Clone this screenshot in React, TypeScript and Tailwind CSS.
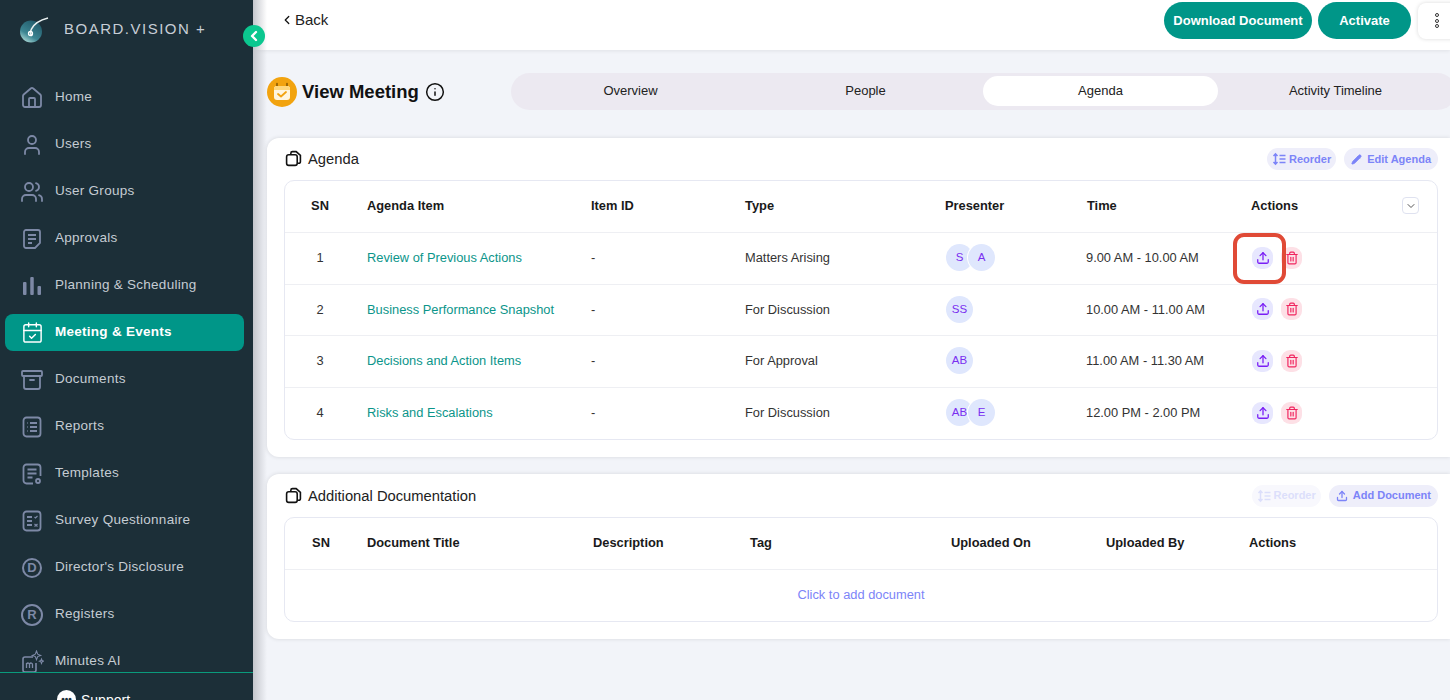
import { ChevronLeft, ChevronDown, House, User, Users, CalendarCheck, Archive, Info, Pencil, Upload, Trash2 } from "lucide-react";
import type { ReactNode } from "react";

const ic = "w-6 h-6 text-[#7d89a6] shrink-0";

function Approvals() {
  return (
    <svg viewBox="0 0 24 24" fill="none" stroke="currentColor" strokeWidth="1.8" className={ic}>
      <path d="M15 21H6a2 2 0 0 1-2-2V5a2 2 0 0 1 2-2h12a2 2 0 0 1 2 2v11l-5 5z" />
      <path d="M8 8h8M8 12h8M8 16h4" />
    </svg>
  );
}

function Bars() {
  return (
    <svg viewBox="0 0 24 24" fill="currentColor" className={ic}>
      <rect x="3" y="8" width="3.5" height="13" rx="1" />
      <rect x="10.25" y="3" width="3.5" height="18" rx="1" />
      <rect x="17.5" y="12" width="3.5" height="9" rx="1" />
    </svg>
  );
}

function ListDoc() {
  return (
    <svg viewBox="0 0 24 24" fill="none" stroke="currentColor" strokeWidth="1.8" className={ic}>
      <rect x="3.5" y="2.5" width="17" height="19" rx="3" />
      <path d="M10 8h7M10 12h7M10 16h7M7 8h.5M7 12h.5M7 16h.5" />
    </svg>
  );
}

function TemplateDoc() {
  return (
    <svg viewBox="0 0 24 24" fill="none" stroke="currentColor" strokeWidth="1.8" className={ic}>
      <path d="M13 21.5H6.5a3 3 0 0 1-3-3v-13a3 3 0 0 1 3-3h11a3 3 0 0 1 3 3V14" />
      <path d="M7.5 7.5h9M7.5 11.5h9M7.5 15.5h5" />
      <circle cx="18" cy="19" r="2" />
    </svg>
  );
}

function SurveyDoc() {
  return (
    <svg viewBox="0 0 24 24" fill="none" stroke="currentColor" strokeWidth="1.8" className={ic}>
      <rect x="3.5" y="2.5" width="17" height="19" rx="3" />
      <path d="M7 8h5M7 12h5M7 16h5" />
      <path d="M14.5 8l1 1 2-2M14.5 15l3 2.5M17.5 15l-3 2.5" strokeWidth="1.2" />
    </svg>
  );
}

function Lettered({ letter, size }: { letter: string; size: string }) {
  return (
    <span className={`${size} rounded-full border-2 border-[#7d89a6] text-[#7d89a6] flex items-center justify-center text-[13px] font-bold shrink-0`}>
      {letter}
    </span>
  );
}

function MinutesIcon() {
  return (
    <svg viewBox="0 0 24 24" fill="none" stroke="currentColor" strokeWidth="1.6" className="w-[24px] h-[24px] text-[#7d89a6] shrink-0">
      <path d="M13 7H5a2 2 0 0 0-2 2v11a2 2 0 0 0 2 2h9a2 2 0 0 0 2-2v-7" />
      <path d="M6.5 18v-5M6.5 14c1-1.5 3-1.2 3 .5V18M9.5 14c1-1.5 3-1.2 3 .5V18" strokeWidth="1.3" />
      <path d="M16.5 1l1.2 3.2 3 1.2-3 1.2-1.2 3.2-1.2-3.2-3-1.2 3-1.2zM21.5 9l.6 1.6 1.4.6-1.4.6-.6 1.6-.6-1.6-1.4-.6 1.4-.6z" strokeWidth="1.1" />
    </svg>
  );
}

const navItems: { label: string; icon: ReactNode; active?: boolean }[] = [
  { label: "Home", icon: <House className={ic} strokeWidth={1.8} /> },
  { label: "Users", icon: <User className={ic} strokeWidth={1.8} /> },
  { label: "User Groups", icon: <Users className={ic} strokeWidth={1.8} /> },
  { label: "Approvals", icon: <Approvals /> },
  { label: "Planning & Scheduling", icon: <Bars /> },
  { label: "Meeting & Events", icon: <span className="w-6 flex justify-center shrink-0"><CalendarCheck className="w-[23px] h-[23px] text-white" strokeWidth={1.5} /></span>, active: true },
  { label: "Documents", icon: <Archive className={ic} strokeWidth={1.8} /> },
  { label: "Reports", icon: <ListDoc /> },
  { label: "Templates", icon: <TemplateDoc /> },
  { label: "Survey Questionnaire", icon: <SurveyDoc /> },
  { label: "Director's Disclosure", icon: <Lettered letter="D" size="w-[20px] h-[20px] mx-[2px]" /> },
  { label: "Registers", icon: <Lettered letter="R" size="w-[22px] h-[22px] mx-px" /> },
  { label: "Minutes AI", icon: <MinutesIcon /> },
];

const agendaRows = [
  { sn: 1, item: "Review of Previous Actions", type: "Matters Arising", people: ["S", "A"], time: "9.00 AM - 10.00 AM" },
  { sn: 2, item: "Business Performance Snapshot", type: "For Discussion", people: ["SS"], time: "10.00 AM - 11.00 AM" },
  { sn: 3, item: "Decisions and Action Items", type: "For Approval", people: ["AB"], time: "11.00 AM - 11.30 AM" },
  { sn: 4, item: "Risks and Escalations", type: "For Discussion", people: ["AB", "E"], time: "12.00 PM - 2.00 PM" },
];

const agendaGrid = "grid grid-cols-[82px_224px_154px_200px_142px_164px_1fr] items-center pb-px";
const docGrid = "grid grid-cols-[82px_226px_157px_201px_155px_143px_1fr] items-center pb-px";

function CopyIcon() {
  return (
    <svg viewBox="0 0 16 16" fill="none" stroke="#111" strokeWidth="1.5" className="w-[17px] h-[17px] shrink-0 ml-px -mt-[2px]">
      <path d="M5.5 4V3a1.5 1.5 0 0 1 1.5-1.5h3.5L14.5 5v6a1.5 1.5 0 0 1-1.5 1.5h-1.5" />
      <rect x="1.5" y="4.5" width="10" height="10" rx="2" />
    </svg>
  );
}

function ReorderIcon() {
  return (
    <svg viewBox="0 0 14 14" fill="none" stroke="currentColor" strokeWidth="1.5" className="w-[14px] h-[14px] shrink-0">
      <path d="M3.5 2.5v9M1.5 4l2-2.2 2 2.2M1.5 10l2 2.2 2-2.2" />
      <path d="M7.5 3.5h6M7.5 7h6M7.5 10.5h6" />
    </svg>
  );
}

function Pill({ icon, label, faded, tight }: { icon: ReactNode; label: string; faded?: boolean; tight?: boolean }) {
  return (
    <span className={`h-[22px] rounded-full flex items-center text-[11px] font-bold ${tight ? "px-[5px] gap-[3px]" : "px-[7px] gap-[5px]"} ${faded ? "bg-[#f8f8fd] text-[#dcdffb]" : "bg-[#eeeefa] text-[#7c84f8]"}`}>
      {icon}
      {label}
    </span>
  );
}

function Logo() {
  return (
    <svg viewBox="0 0 30 26" className="w-[30px] h-[26px]">
      <defs>
        <linearGradient id="logoFill" x1="0.8" y1="0" x2="0.2" y2="1">
          <stop offset="0" stopColor="#1f5666" />
          <stop offset="0.65" stopColor="#3c8592" />
          <stop offset="1" stopColor="#b4e0dc" />
        </linearGradient>
      </defs>
      <circle cx="12" cy="14.5" r="11" fill="url(#logoFill)" />
      <path d="M29 1C21 3 15 7 12.5 12c-1 2-1.500 5 .5 7" fill="none" stroke="#e8f0f0" strokeWidth="1.6" />
      <circle cx="11.500" cy="16.500" r="2" fill="none" stroke="#fff" strokeWidth="1.3" />
    </svg>
  );
}

function MeetingBadge() {
  return (
    <svg viewBox="0 0 30 30" className="w-[30px] h-[30px] shrink-0">
      <circle cx="15" cy="15" r="15" fill="#f2a30f" />
      <path d="M10 6.500v4M20 6.500v4" stroke="#8a5a00" strokeWidth="1.600" strokeLinecap="round" />
      <rect x="7" y="9" width="16" height="14" rx="3" fill="#fff6df" />
      <path d="M7 12a3 3 0 0 1 3-3h10a3 3 0 0 1 3 3v1H7z" fill="#ffd77a" />
      <path d="M11 17l3 2.500 5-4.500" fill="none" stroke="#f2a30f" strokeWidth="1.800" strokeLinecap="round" strokeLinejoin="round" />
    </svg>
  );
}

export default function App() {
  return (
    <div className="relative h-screen w-full overflow-hidden flex bg-[#f2f4f9] font-['Liberation_Sans',Arial,sans-serif]">
      {/* SIDEBAR */}
      <aside className="w-[253px] h-full shrink-0 bg-[#1c2f38] flex flex-col overflow-hidden">
        <div className="h-[58px] shrink-0 flex items-center pl-[19px] pt-[1px]">
          <Logo />
          <span className="ml-[15px] text-[15px] tracking-[0.1em] text-[#c7ced6] whitespace-nowrap">BOARD.VISION +</span>
        </div>
        <nav className="h-[614px] shrink-0 overflow-hidden flex flex-col pt-[21px]">
          {navItems.map((n) => (
            <div
              key={n.label}
              className={`h-[37px] mb-[10px] ml-[5px] w-[239px] shrink-0 rounded-lg flex items-center gap-[11px] pl-[15px] text-[13.5px] tracking-[0.02em] ${
                n.active ? "bg-[#009688] text-white font-bold" : "text-[#c5ccd3]"
              }`}
            >
              {n.icon}
              <span className="whitespace-nowrap">{n.label}</span>
            </div>
          ))}
        </nav>
        <div className="border-t border-[#0a9b7c] flex-1 flex items-start pl-[57px] pt-[17px] gap-[5px]">
          <span className="w-[19px] h-[19px] rounded-full bg-white text-[#1c2f38] flex items-center justify-center text-[10px] font-bold leading-none shrink-0">•••</span>
          <span className="text-white text-[14px] font-medium">Support</span>
        </div>
      </aside>

      {/* COLLAPSE TOGGLE */}
      <div className="absolute left-[243px] top-[25px] z-20 w-[22px] h-[22px] rounded-full bg-[#0bc78f] flex items-center justify-center">
        <ChevronLeft className="w-4 h-4 text-white" strokeWidth={3.5} />
      </div>

      {/* MAIN */}
      <main className="relative flex-1 min-w-0 flex flex-col">
        <div className="absolute left-0 top-0 bottom-0 w-[14px] bg-gradient-to-r from-[#c4c6cc] to-transparent z-10" />

        {/* TOP BAR */}
        <header className="relative h-[50px] shrink-0 bg-white shadow-[0_1px_4px_rgba(0,0,0,0.08)] flex items-start pl-[27px]">
          <div className="flex items-center gap-[1px] h-[40px] text-[15px] text-[#222]">
            <ChevronLeft className="w-[14px] h-[14px] text-[#111]" strokeWidth={2.2} />
            Back
          </div>
          <div className="ml-auto flex items-center mt-[2px] -mr-[12px]">
            <button className="h-[37px] w-[148px] rounded-full bg-[#009688] text-white text-[13px] font-bold">Download Document</button>
            <button className="h-[37px] w-[93px] ml-[6px] rounded-full bg-[#009688] text-white text-[13px] font-bold">Activate</button>
            <span className="h-[36px] w-[44px] ml-[7px] rounded-lg bg-white shadow-[0_0_4px_rgba(0,0,0,0.15)] flex flex-col gap-[1.5px] pl-[17px] justify-center">
              <span className="w-[4px] h-[4px] rounded-full border border-[#333]" />
              <span className="w-[4px] h-[4px] rounded-full border border-[#333]" />
              <span className="w-[4px] h-[4px] rounded-full border border-[#333]" />
            </span>
          </div>
        </header>

        <div className="pl-[14px] flex-1 min-h-0">
          {/* TITLE + TABS */}
          <div className="flex items-center mt-[23px] h-[37px]">
            <div className="w-[244px] shrink-0 flex items-center">
              <MeetingBadge />
              <h1 className="ml-[5px] text-[18.5px] font-bold text-[#111] whitespace-nowrap">View Meeting</h1>
              <Info className="ml-[6px] w-5 h-5 text-[#111] shrink-0" strokeWidth={1.8} />
            </div>
            <div className="h-[37px] w-[945px] shrink-0 rounded-full bg-[#ece9f1] flex items-center px-[2px] pb-px text-[13px] text-[#222]">
              <span className="w-[235px] shrink-0 text-center">Overview</span>
              <span className="w-[235px] shrink-0 text-center">People</span>
              <span className="w-[235px] shrink-0 h-[30px] rounded-full bg-white flex items-center justify-center">Agenda</span>
              <span className="w-[235px] shrink-0 text-center">Activity Timeline</span>
            </div>
          </div>

          {/* AGENDA CARD */}
          <section className="mt-[28px] h-[319px] rounded-l-xl bg-white shadow-[0_0_4px_rgba(0,0,0,0.12)] pl-[17px] pr-[12px]">
            <div className="h-[42px] flex items-center gap-[6px] pt-px text-[14.75px] text-[#222]">
              <CopyIcon />
              Agenda
              <div className="ml-auto flex gap-[8px] -mt-px">
                <Pill tight icon={<ReorderIcon />} label="Reorder" />
                <Pill icon={<Pencil className="w-[11px] h-[11px] fill-current" strokeWidth={2} />} label="Edit Agenda" />
              </div>
            </div>
            <div className="h-[260px] rounded-[10px] border border-[#e6e8f2] text-[12.85px] text-[#333]">
              <div className={`${agendaGrid} h-[52px] border-b border-[#eeeff3] font-bold text-[#1a1a1a]`}>
                <span className="w-[70px] text-center">SN</span>
                <span>Agenda Item</span>
                <span>Item ID</span>
                <span>Type</span>
                <span>Presenter</span>
                <span>Time</span>
                <span className="flex items-center justify-between pr-[18px]">
                  Actions
                  <span className="w-[17px] h-[17px] rounded-[4px] border border-[#dfe2f0] flex items-center justify-center">
                    <ChevronDown className="w-3 h-3 text-[#555]" strokeWidth={2} />
                  </span>
                </span>
              </div>
              {agendaRows.map((r, i) => (
                <div key={r.sn} className={`${agendaGrid} h-[51.5px] ${i < 3 ? "border-b border-[#eeeff3]" : ""}`}>
                  <span className="w-[70px] text-center">{r.sn}</span>
                  <span className="text-[#0b958a] whitespace-nowrap">{r.item}</span>
                  <span>-</span>
                  <span>{r.type}</span>
                  <span className="flex pl-px">
                    {r.people.map((p, j) => (
                      <span
                        key={p}
                        className={`w-[27px] h-[27px] rounded-full bg-[#dfe7fd] text-[#7a2ff0] text-[11.5px] flex items-center justify-center ${j > 0 ? "-ml-[5px] ring-1 ring-white" : ""}`}
                      >
                        {p}
                      </span>
                    ))}
                  </span>
                  <span className="-ml-px whitespace-nowrap">{r.time}</span>
                  <span className="flex items-center gap-[8px] pl-px">
                    <span className="w-[21px] h-[22px] rounded-[9px] bg-[#e7e7fe] flex items-center justify-center">
                      <Upload className="w-[14px] h-[14px] text-[#7a1ff5]" strokeWidth={2.2} />
                    </span>
                    <span className="w-[21px] h-[22px] rounded-[9px] bg-[#fde0e6] flex items-center justify-center">
                      <Trash2 className="w-[14px] h-[14px] text-[#f0245e]" strokeWidth={2} />
                    </span>
                  </span>
                </div>
              ))}
            </div>
          </section>

          {/* ADDITIONAL DOCUMENTATION CARD */}
          <section className="mt-[17px] h-[165px] rounded-l-xl bg-white shadow-[0_0_4px_rgba(0,0,0,0.12)] pl-[17px] pr-[12px]">
            <div className="h-[43px] flex items-center gap-[6px] pt-px text-[14.75px] text-[#222]">
              <CopyIcon />
              Additional Documentation
              <div className="ml-auto flex gap-[8px] -mt-px">
                <Pill faded tight icon={<ReorderIcon />} label="Reorder" />
                <Pill icon={<Upload className="w-[12px] h-[12px]" strokeWidth={2.6} />} label="Add Document" />
              </div>
            </div>
            <div className="h-[105px] rounded-[10px] border border-[#e6e8f2] text-[12.85px]">
              <div className={`${docGrid} h-[52px] border-b border-[#eeeff3] font-bold text-[#1a1a1a]`}>
                <span className="w-[72px] text-center">SN</span>
                <span>Document Title</span>
                <span>Description</span>
                <span>Tag</span>
                <span>Uploaded On</span>
                <span>Uploaded By</span>
                <span>Actions</span>
              </div>
              <div className="h-[51px] flex items-center justify-center pb-px text-[#7c84f8]">Click to add document</div>
            </div>
          </section>
        </div>

        {/* HIGHLIGHT */}
        <div className="absolute left-[980px] top-[233px] w-[53px] h-[51px] rounded-[11px] border-[4px] border-[#e04a36] z-10" />
      </main>
    </div>
  );
}
